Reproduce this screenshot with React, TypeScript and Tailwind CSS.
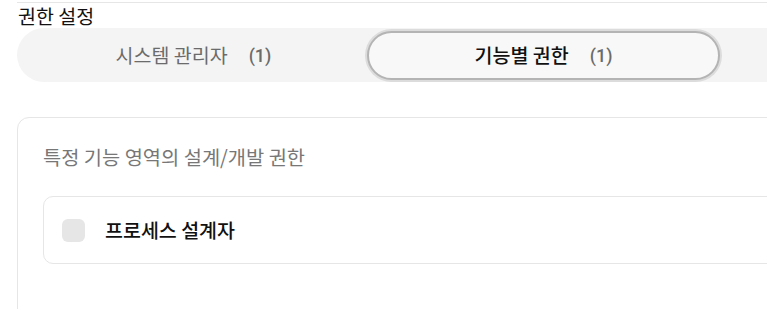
const font = { fontFamily: '"Noto Sans CJK KR", "Noto Sans", sans-serif' };
const latin = { fontFamily: 'Roboto, "Noto Sans", sans-serif' };

interface TabProps {
  label: string;
  count: number;
  active?: boolean;
}

const Tab = ({ label, count, active }: TabProps) => {
  return (
    <button
      className={
        active
          ? "flex h-[49px] w-[353px] shrink-0 items-center justify-center rounded-full border-2 border-[#b4b4b4] bg-[#f8f8f8] ring-2 ring-[#dcdcdc]"
          : "flex h-[49px] w-[347px] shrink-0 items-center justify-center rounded-full"
      }
    >
      <span
        className={
          active
            ? "text-[19.5px] font-medium text-[#111]"
            : "text-[19.5px] font-normal text-[#6b6b6b]"
        }
      >
        {label}
      </span>
      <span className="ml-[21px] text-[18px] font-medium text-[#6b6b6b]" style={latin}>
        ({count})
      </span>
    </button>
  );
};

export default function App() {
  return (
    <div className="h-[309px] w-full overflow-hidden bg-white" style={font}>
      <div className="ml-[17px] mt-[2px] w-[1100px] border-t border-[#e6e6e6]">
        <h2 className="mt-[2px] pl-[1px] text-[19.5px] leading-[22px] text-[#111]">
          권한 설정
        </h2>
        <div className="mt-[1px] flex h-[54px] items-center rounded-full bg-[#f4f4f4] pl-[3px]">
          <Tab label="시스템 관리자" count={1} />
          <Tab label="기능별 권한" count={1} active />
        </div>

        <div className="mt-[35px] h-[260px] rounded-[12px] border border-[#e6e6e6] px-[25px] pt-[26px]">
          <p className="text-[19.8px] leading-[26px] text-[#777]">
            특정 기능 영역의 설계/개발 권한
          </p>
          <div className="mt-[26px] flex h-[68px] items-center rounded-[10px] border border-[#e6e6e6] pl-[18px]">
            <span className="h-[23px] w-[23px] rounded-[6px] bg-[#e6e6e6]" />
            <span className="ml-[20px] text-[19.5px] font-medium text-[#111]">
              프로세스 설계자
            </span>
          </div>
        </div>
      </div>
    </div>
  );
}
